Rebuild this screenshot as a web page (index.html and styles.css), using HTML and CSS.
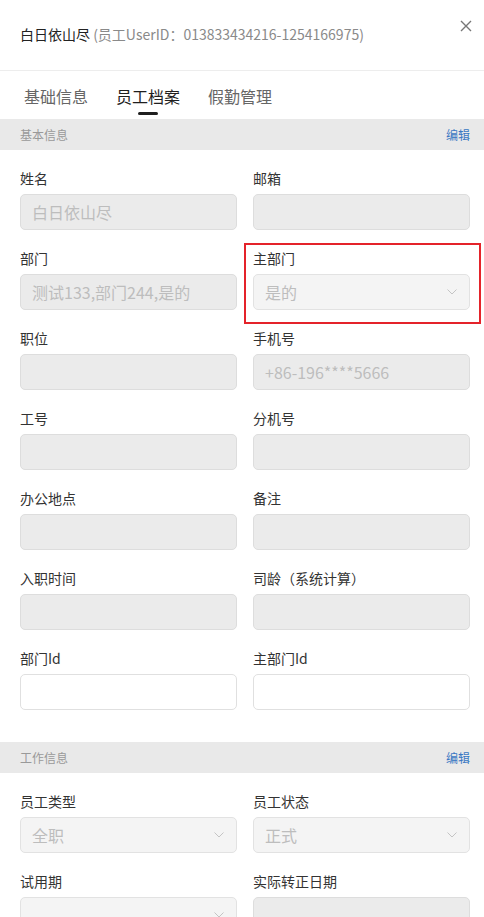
FILE: index.html
```html
<!DOCTYPE html>
<html lang="zh-CN">
<head>
    <meta charset="UTF-8">
    <meta name="viewport" content="width=device-width, initial-scale=1.0">
    <title>员工档案</title>
    <link rel="stylesheet" href="styles.css">
</head>
<body>
    <div class="drawer">
        <div class="drawer-header">
            <div class="drawer-title">白日依山尽 <span class="sub">(员工UserID：013833434216-1254166975)</span></div>
            <svg class="close" width="12" height="12" viewBox="0 0 12 12"><path d="M1 1L11 11M11 1L1 11" stroke="#777" stroke-width="1.4" fill="none"/></svg>
        </div>

        <div class="tabs">
            <div class="tab">基础信息</div>
            <div class="tab active">员工档案</div>
            <div class="tab">假勤管理</div>
        </div>

        <div class="section-bar">
            <span>基本信息</span>
            <a class="edit">编辑</a>
        </div>
        <div class="form-grid">
            <div class="field">
                <div class="label">姓名</div>
                <div class="input disabled">白日依山尽</div>
            </div>
            <div class="field">
                <div class="label">邮箱</div>
                <div class="input disabled"></div>
            </div>
            <div class="field">
                <div class="label">部门</div>
                <div class="input disabled">测试133,部门244,是的</div>
            </div>
            <div class="field highlighted">
                <div class="label">主部门</div>
                <div class="input select">是的<svg class="chev" width="10" height="6" viewBox="0 0 10 6"><path d="M0.5 0.5L5 5L9.5 0.5" stroke="#c4c4c4" fill="none"/></svg></div>
                <div class="mark"></div>
            </div>
            <div class="field">
                <div class="label">职位</div>
                <div class="input disabled"></div>
            </div>
            <div class="field">
                <div class="label">手机号</div>
                <div class="input disabled">+86-196****5666</div>
            </div>
            <div class="field">
                <div class="label">工号</div>
                <div class="input disabled"></div>
            </div>
            <div class="field">
                <div class="label">分机号</div>
                <div class="input disabled"></div>
            </div>
            <div class="field">
                <div class="label">办公地点</div>
                <div class="input disabled"></div>
            </div>
            <div class="field">
                <div class="label">备注</div>
                <div class="input disabled"></div>
            </div>
            <div class="field">
                <div class="label">入职时间</div>
                <div class="input disabled"></div>
            </div>
            <div class="field">
                <div class="label">司龄（系统计算）</div>
                <div class="input disabled"></div>
            </div>
            <div class="field">
                <div class="label">部门Id</div>
                <div class="input"></div>
            </div>
            <div class="field">
                <div class="label">主部门Id</div>
                <div class="input"></div>
            </div>
        </div>

        <div class="section-bar">
            <span>工作信息</span>
            <a class="edit">编辑</a>
        </div>
        <div class="form-grid">
            <div class="field">
                <div class="label">员工类型</div>
                <div class="input select">全职<svg class="chev" width="10" height="6" viewBox="0 0 10 6"><path d="M0.5 0.5L5 5L9.5 0.5" stroke="#c4c4c4" fill="none"/></svg></div>
            </div>
            <div class="field">
                <div class="label">员工状态</div>
                <div class="input select">正式<svg class="chev" width="10" height="6" viewBox="0 0 10 6"><path d="M0.5 0.5L5 5L9.5 0.5" stroke="#c4c4c4" fill="none"/></svg></div>
            </div>
            <div class="field">
                <div class="label">试用期</div>
                <div class="input select"><svg class="chev" width="10" height="6" viewBox="0 0 10 6"><path d="M0.5 0.5L5 5L9.5 0.5" stroke="#c4c4c4" fill="none"/></svg></div>
            </div>
            <div class="field">
                <div class="label">实际转正日期</div>
                <div class="input disabled"></div>
            </div>
        </div>
    </div>
</body>
</html>
```

FILE: styles.css
```css
body {
    margin: 0;
    font-family: "Noto Sans CJK SC", "Noto Sans", sans-serif;
    background-color: #ffffff;
    color: #333333;
    overflow: hidden;
}

.drawer {
    width: 484px;
    height: 917px;
    overflow: hidden;
}

.drawer-header {
    height: 71px;
    border-bottom: 1px solid #ededed;
    display: flex;
    align-items: center;
    justify-content: space-between;
    padding: 0 12px 0 20px;
    box-sizing: border-box;
}

.drawer-title {
    font-size: 14px;
    color: #222222;
    line-height: 20px;
    margin-top: -2px;
}

.drawer-title .sub {
    color: #8a8a8a;
}

.close {
    align-self: flex-start;
    margin-top: 20px;
}

.tabs {
    display: flex;
    gap: 28px;
    padding: 0 24px;
    height: 48px;
}

.tab {
    font-size: 16px;
    line-height: 22px;
    color: #666666;
    padding-top: 14px;
    position: relative;
}

.tab.active {
    color: #1f1f1f;
}

.tab.active::after {
    content: "";
    position: absolute;
    left: 22px;
    width: 20px;
    top: 41px;
    height: 3px;
    border-radius: 2px;
    background-color: #1f1f1f;
}

.section-bar {
    height: 31px;
    background-color: #e9e9e9;
    display: flex;
    align-items: center;
    justify-content: space-between;
    padding: 0 14px 0 20px;
    font-size: 12px;
    color: #999999;
}

.edit {
    color: #3a78c3;
    cursor: pointer;
}

.form-grid {
    display: grid;
    grid-template-columns: 1fr 1fr;
    column-gap: 16px;
    row-gap: 18px;
    padding: 18px 14px 32px 20px;
}

.field {
    position: relative;
    display: flex;
    flex-direction: column;
    gap: 6px;
}

.label {
    font-size: 14px;
    line-height: 20px;
    color: #333333;
}

.input {
    height: 36px;
    box-sizing: border-box;
    border: 1px solid #e0e0e0;
    border-radius: 5px;
    background-color: #ffffff;
    padding: 0 11px;
    font-size: 16px;
    color: #bdbdbd;
    display: flex;
    align-items: center;
    white-space: nowrap;
    overflow: hidden;
}

.input.disabled {
    background-color: #ebebeb;
    border-color: #dddddd;
}

.input.select {
    background-color: #f4f4f4;
    border-color: #e2e2e2;
}

.chev {
    margin-left: auto;
    margin-right: 1px;
}

.mark {
    position: absolute;
    top: -5px;
    left: -9px;
    right: -11px;
    bottom: -14px;
    border: 2px solid #e4232a;
}
```
